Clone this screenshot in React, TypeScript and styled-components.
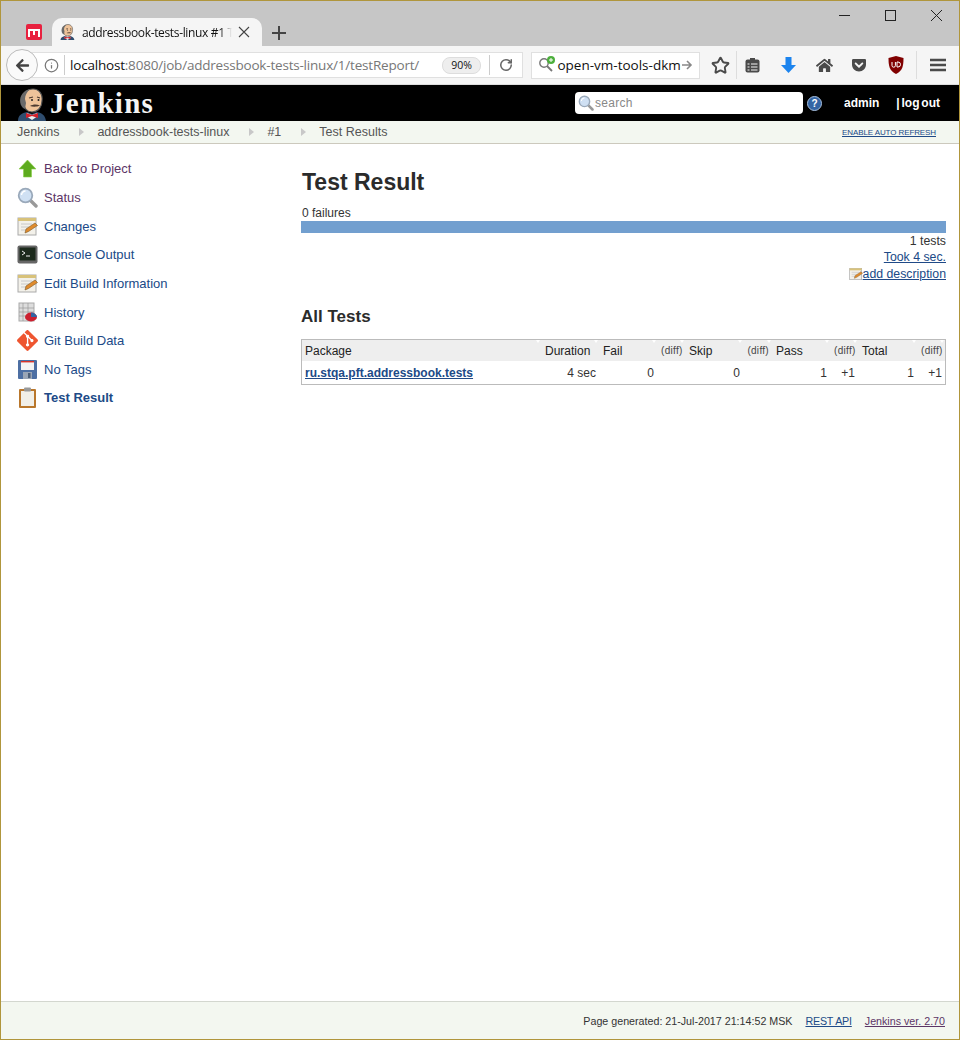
import React from "react";
import styled, { createGlobalStyle } from "styled-components";
import { FaArrowLeft, FaGetPocket, FaHome } from "react-icons/fa";
import { SiGit } from "react-icons/si";
import { Info, RotateCw, Star } from "lucide-react";

const GlobalStyle = createGlobalStyle`
  html, body {
    margin: 0;
    padding: 0;
    background: #fff;
  }
  body {
    font-family: "Liberation Sans", Arial, sans-serif;
    font-size: 12px;
    color: #333;
  }
`;

const Window = styled.div`
  width: 960px;
  height: 1040px;
  box-sizing: border-box;
  border: 1px solid #b0963c;
  display: flex;
  flex-direction: column;
  overflow: hidden;
`;

/* browser chrome */
const TabStrip = styled.div`
  height: 45px;
  flex: none;
  background: #c6c6c6;
  display: flex;
  align-items: flex-end;
  padding-left: 25px;
  position: relative;
`;

const PinnedTab = styled.div`
  width: 16px;
  height: 16px;
  margin-bottom: 6px;
  border-radius: 2px;
  background: #e8213f;
  display: flex;
  align-items: center;
  justify-content: center;
`;

const Tab = styled.div`
  width: 210px;
  height: 28px;
  margin-left: 10px;
  background: #f5f5f5;
  border-radius: 10px 10px 0 0;
  display: flex;
  align-items: center;
  padding: 0 0 0 8px;
  box-sizing: border-box;
  font-family: "Open Sans", "Noto Sans", sans-serif;
  font-size: 12px;
  color: #111;
`;

const TabTitle = styled.span`
  margin-left: 7px;
  width: 150px;
  flex: none;
  white-space: nowrap;
  letter-spacing: -0.35px;
  -webkit-mask-image: linear-gradient(to right, #000 92%, transparent);
  mask-image: linear-gradient(to right, #000 92%, transparent);
`;

const TabClose = styled.span`
  margin-left: 6px;
  display: flex;
`;

const NewTab = styled.div`
  margin: 0 0 6px 10px;
  width: 14px;
  height: 14px;
  position: relative;
  &::before,
  &::after {
    content: "";
    position: absolute;
    background: #444;
  }
  &::before {
    left: 0;
    right: 0;
    top: 6px;
    height: 2px;
  }
  &::after {
    top: 0;
    bottom: 0;
    left: 6px;
    width: 2px;
  }
`;

const WindowControls = styled.div`
  position: absolute;
  right: 17px;
  top: 9px;
  display: flex;
  gap: 35px;
  align-items: center;
`;

const ToolBar = styled.div`
  height: 38px;
  flex: none;
  background: #f5f5f5;
  border-bottom: 1px solid #ddd;
  display: flex;
  align-items: center;
  padding-left: 5px;
  position: relative;
`;

const UrlBox = styled.div`
  width: 507px;
  height: 26px;
  margin-left: 12px;
  padding-left: 18px;
  background: #fff;
  border: 1px solid #e0e0e0;
  display: flex;
  align-items: center;
  box-sizing: border-box;
  font-family: "Open Sans", "Noto Sans", sans-serif;
  font-size: 13.5px;
  color: #111;
`;

const BackButton = styled.div`
  position: absolute;
  left: 5px;
  top: 3px;
  width: 30px;
  height: 30px;
  border-radius: 50%;
  border: 1px solid #bbb;
  background: #fafafa;
  display: flex;
  align-items: center;
  justify-content: center;
  color: #444;
  z-index: 1;
`;

const InfoSlot = styled.div`
  width: 20px;
  margin-left: 7px;
  color: #777;
  display: flex;
  align-items: center;
  border-right: 1px solid #ccc;
  height: 20px;
  flex: none;
`;

const UrlText = styled.span`
  margin-left: 5px;
  width: 372px;
  flex: none;
  white-space: nowrap;
  letter-spacing: -0.2px;
  color: #777;
  b {
    font-weight: 400;
    color: #111;
  }
`;

const ZoomPill = styled.div`
  width: 37px;
  height: 15px;
  border-radius: 8px;
  border: 1px solid #ddd;
  background: #eee;
  font-size: 10.5px;
  line-height: 15px;
  text-align: center;
  flex: none;
`;

const ReloadSlot = styled.div`
  margin-left: 8px;
  padding-left: 9px;
  height: 20px;
  border-left: 1px solid #ccc;
  display: flex;
  align-items: center;
  color: #666;
`;

const SearchBox = styled.div`
  width: 169px;
  height: 27px;
  margin-left: 8px;
  background: #fff;
  border: 1px solid #e0e0e0;
  box-sizing: border-box;
  display: flex;
  align-items: center;
  padding: 0 5px 0 6px;
  font-family: "Open Sans", "Noto Sans", sans-serif;
  font-size: 13.5px;
  color: #111;
`;

const SearchText = styled.span`
  margin-left: 1px;
  width: 124px;
  flex: none;
  white-space: nowrap;
`;

const ToolIcons = styled.div`
  display: flex;
  align-items: center;
  height: 100%;
  padding-left: 6px;
`;

const ToolIcon = styled.div<{ $width: number; $color?: string; $divider?: boolean }>`
  width: ${(p) => p.$width}px;
  display: flex;
  flex: none;
  justify-content: center;
  align-items: center;
  color: ${(p) => p.$color || "#4a4a4a"};
  height: ${(p) => (p.$divider ? "28px" : "auto")};
  border-right: ${(p) => (p.$divider ? "1px solid #ddd" : "0")};
`;

/* jenkins header */
const PageHeader = styled.header`
  height: 36px;
  flex: none;
  background: #000;
  display: flex;
  align-items: flex-end;
  padding-left: 16px;
`;

const LogoName = styled.span`
  font-family: "Liberation Serif", serif;
  font-weight: 700;
  font-size: 29px;
  line-height: 36px;
  color: #f4f4f4;
  margin-left: 3px;
  align-self: center;
  letter-spacing: 1.3px;
`;

const HeaderSearch = styled.div`
  margin-left: auto;
  align-self: center;
  width: 228px;
  height: 22px;
  background: #fff;
  border-radius: 4px;
  display: flex;
  align-items: center;
  padding-left: 3px;
  box-sizing: border-box;
  color: #888;
  font-size: 12px;
  gap: 1px;
  letter-spacing: 0.3px;
`;

const HelpDot = styled.div`
  align-self: center;
  width: 13px;
  height: 13px;
  margin-left: 4px;
  border-radius: 50%;
  background: #3465a4;
  border: 1px solid #a9c0de;
  color: #fff;
  font-size: 10px;
  font-weight: 700;
  line-height: 13px;
  text-align: center;
`;

const HeaderLink = styled.a<{ $left: number; $right?: number }>`
  align-self: center;
  color: #fff;
  font-weight: 700;
  font-size: 12px;
  word-spacing: -1.5px;
  margin-left: ${(p) => p.$left}px;
  margin-right: ${(p) => p.$right || 0}px;
`;

/* breadcrumbs */
const CrumbBar = styled.nav`
  height: 22px;
  flex: none;
  background: #f3f7f0;
  border-bottom: 1px solid #ccc9bd;
  display: flex;
  align-items: center;
  padding: 0 23px 0 16px;
  font-size: 12.5px;
  color: #555;
`;

const Crumb = styled.a`
  color: #555;
`;

const CrumbArrow = styled.span`
  width: 0;
  height: 0;
  border-left: 5px solid #c8c8c8;
  border-top: 4px solid transparent;
  border-bottom: 4px solid transparent;
  margin: 0 13px 0 20px;
`;

const AutoRefresh = styled.a`
  margin-left: auto;
  font-size: 8px;
  letter-spacing: -0.1px;
  color: #204a87;
  text-decoration: underline;
`;

/* page body */
const Body = styled.div`
  flex: 1;
  display: flex;
  min-height: 0;
`;

const SidePanel = styled.aside`
  width: 300px;
  flex: none;
  box-sizing: border-box;
  padding: 10.5px 0 0 16px;
`;

const TaskRow = styled.a<{ $visited?: boolean; $active?: boolean }>`
  display: flex;
  align-items: center;
  height: 28.65px;
  color: ${(p) => (p.$visited ? "#5c3566" : "#204a87")};
  font-weight: ${(p) => (p.$active ? 700 : 400)};
  font-size: 13px;
`;

const TaskIcon = styled.span`
  width: 27px;
  display: flex;
  align-items: center;
  flex: none;
`;

const Main = styled.main`
  flex: 1;
  padding: 23px 13px 0 0;
  min-width: 0;
`;

const Title = styled.h1`
  margin: 0 0 0 1px;
  font-size: 23px;
  line-height: 30px;
  font-weight: 700;
  color: #2b2b2b;
`;

const Failures = styled.div`
  margin: 9px 0 0 1px;
  line-height: 15px;
`;

const ProgressBar = styled.div`
  height: 12px;
  background: #729fcf;
`;

const SummaryLine = styled.div`
  line-height: 16.4px;
  font-size: 12.3px;
  display: flex;
  justify-content: flex-end;
  align-items: center;
  a {
    color: #204a87;
    text-decoration: underline;
  }
`;

const SectionTitle = styled.h2`
  margin: 25px 0 12px;
  font-size: 17px;
  line-height: 20px;
  font-weight: 700;
  color: #2b2b2b;
`;

const ResultTable = styled.table`
  width: 645px;
  table-layout: fixed;
  border-collapse: separate;
  border-spacing: 0;
  border: 1px solid #bbb;
  font-size: 12px;
`;

const HeadCell = styled.th<{ $small?: boolean }>`
  height: 21px;
  padding: 0 3px 0 4px;
  background: #eee;
  font-weight: 400;
  text-align: ${(p) => (p.$small ? "right" : "left")};
  font-size: ${(p) => (p.$small ? "10px" : "12px")};
  letter-spacing: ${(p) => (p.$small ? "0.3px" : "0")};
  color: ${(p) => (p.$small ? "#444" : "#222")};
  position: relative;
  white-space: nowrap;
  &:first-child {
    padding-left: 3px;
  }
  &::after {
    content: "";
    position: absolute;
    top: 0;
    right: 1px;
    border-top: 3px solid #fff;
    border-left: 2.5px solid transparent;
    border-right: 2.5px solid transparent;
  }
`;

const DataCell = styled.td<{ $left?: boolean }>`
  height: 23px;
  padding: 0 3px;
  text-align: ${(p) => (p.$left ? "left" : "right")};
  color: #333;
  a {
    color: #204a87;
    font-weight: 700;
    text-decoration: underline;
  }
`;

const Footer = styled.footer`
  height: 38px;
  flex: none;
  box-sizing: border-box;
  border-top: 1px solid #d3d7cf;
  background: #f3f7f0;
  display: flex;
  justify-content: flex-end;
  align-items: center;
  padding-right: 14px;
  font-size: 10.7px;
  color: #333;
`;

const FootLink = styled.a<{ $visited?: boolean }>`
  margin-left: 13px;
  color: ${(p) => (p.$visited ? "#5c3566" : "#204a87")};
  letter-spacing: ${(p) => (p.$visited ? "0" : "-0.2px")};
  text-decoration: underline;
`;

/* little drawings */
function Butler({ size }: { size: number }) {
  return (
    <svg width={size} height={size * 1.1} viewBox="0 0 30 33">
      <path d="M1 33c0-6 4-8 9-9l5 2 5-2c5 1 8 3 9 9z" fill="#2f4d6e" />
      <path d="M10 25l5 2 5-2 1 3-6 4-6-4z" fill="#eee" />
      <path d="M9 25l6 2 6-2v5l-6-2-6 2z" fill="#d3202a" />
      <path d="M6 14C5 6 10 1 16 1s10 5 9 12c0 6-4 11-10 11-5 0-8-4-9-10z" fill="#eec39a" stroke="#555" strokeWidth="1.2" />
      <path d="M6 20C2 16 2 8 7 4c2-2 4-2.500 6-3-3 3-5 6-5 10l1 4-1 6z" fill="#6a6a6a" />
      <path d="M13 18c3-2 7-2 10-.5-3 1.500-7 1.500-10 .5z" fill="#4b3a30" />
      <path d="M12 10l4-1M20 9l3 1" stroke="#4b3a30" strokeWidth="1.2" />
      <circle cx="15" cy="12" r="1" fill="#222" />
      <circle cx="21.500" cy="12" r="1" fill="#222" />
    </svg>
  );
}

function Magnifier({ size = 21 }: { size?: number }) {
  return (
    <svg width={size} height={size} viewBox="0 0 21 21">
      <path d="M13 13l6 6" stroke="#999" strokeWidth="3.4" strokeLinecap="round" />
      <circle cx="8.5" cy="8.5" r="6.8" fill="#cfe0f3" stroke="#9aa9ba" strokeWidth="1.8" />
      <path d="M4.5 8a4 4 0 0 1 4-4" stroke="#fff" strokeWidth="1.4" fill="none" />
    </svg>
  );
}

function Notepad({ size = 21 }: { size?: number }) {
  return (
    <svg width={size} height={size} viewBox="0 0 21 21">
      <rect x="1" y="2" width="18" height="17" fill="#f3f1ea" stroke="#aaa" />
      <rect x="1" y="2" width="18" height="3" fill="#d8c27a" />
      <path d="M4 8h11M4 11h8M4 14h5" stroke="#c8c8c8" />
      <path d="M8 17l1-4 9-6 2.500 2.500-9 6z" fill="#e08b2d" stroke="#7a5a2a" strokeWidth=".6" />
    </svg>
  );
}

function UpArrow() {
  return (
    <svg width="21" height="21" viewBox="0 0 21 21">
      <path d="M10.5 2L19 11h-4.5v8h-8v-8H2z" fill="#5dab1e" stroke="#8ccf4a" strokeWidth=".6" />
    </svg>
  );
}

function Terminal() {
  return (
    <svg width="21" height="21" viewBox="0 0 21 21">
      <rect x=".5" y="1.5" width="20" height="18" rx="2" fill="#666" />
      <rect x="2.5" y="3.5" width="16" height="13" fill="#1c2a1c" />
      <path d="M5 7l3 2-3 2" stroke="#eee" strokeWidth="1" fill="none" />
      <path d="M9 12h4" stroke="#eee" />
    </svg>
  );
}

function HistoryIcon() {
  return (
    <svg width="21" height="21" viewBox="0 0 21 21">
      <rect x="2" y="1" width="15" height="18" fill="#ddd" stroke="#aaa" />
      <path d="M2 6h15M2 10h15M2 14h15M6 1v18M11 1v18" stroke="#999" strokeWidth=".7" />
      <ellipse cx="14" cy="15" rx="6" ry="4.4" fill="#cc2030" />
      <path d="M14 15V10.6a6 4.4 0 0 1 6 4.4z" fill="#3465a4" />
    </svg>
  );
}

function Floppy() {
  return (
    <svg width="21" height="21" viewBox="0 0 21 21">
      <rect x="1" y="1" width="19" height="19" rx="1" fill="#4d6fa3" />
      <rect x="4" y="2" width="13" height="9" fill="#f4f4f4" />
      <rect x="4" y="2" width="13" height="1.4" fill="#d8342a" />
      <rect x="6" y="13" width="9" height="7" fill="#9aa5b5" />
      <rect x="11" y="14" width="2.5" height="5" fill="#4d5f78" />
    </svg>
  );
}

function Clipboard() {
  return (
    <svg width="21" height="22" viewBox="0 0 21 22">
      <rect x="2" y="2" width="17" height="19" rx="1" fill="#b9772c" />
      <rect x="4" y="4" width="13" height="15" fill="#f1efe8" />
      <rect x="7" y="0.5" width="7" height="4" rx="1" fill="#999" />
    </svg>
  );
}

function UBlock() {
  return (
    <svg width="16" height="18" viewBox="0 0 16 18">
      <path d="M8 0l7.500 2c0 8-1 13-7.500 16C1.500 15 .5 10 .5 2z" fill="#800000" />
      <path d="M4 6v3.500a1.700 1.700 0 0 0 3.400 0V6M9 6v5h1a2.500 2.500 0 0 0 0-5z" stroke="#fff" fill="none" />
    </svg>
  );
}

const tasks = [
  { label: "Back to Project", icon: <UpArrow />, visited: true },
  { label: "Status", icon: <Magnifier />, visited: true },
  { label: "Changes", icon: <Notepad /> },
  { label: "Console Output", icon: <Terminal /> },
  { label: "Edit Build Information", icon: <Notepad /> },
  { label: "History", icon: <HistoryIcon /> },
  { label: "Git Build Data", icon: <SiGit size={21} color="#ee5530" /> },
  { label: "No Tags", icon: <Floppy /> },
  { label: "Test Result", icon: <Clipboard />, active: true },
];

const columns: [string, number, boolean?][] = [
  ["Package", 239],
  ["Duration", 58],
  ["Fail", 58],
  ["(diff)", 28, true],
  ["Skip", 58],
  ["(diff)", 29, true],
  ["Pass", 58],
  ["(diff)", 28, true],
  ["Total", 59],
  ["(diff)", 28, true],
];

export default function App() {
  return (
    <Window>
      <GlobalStyle />
      <TabStrip>
        <PinnedTab>
          <svg width="12" height="9" viewBox="0 0 12 9">
            <path d="M1 9V2h10v7M6 2v5" stroke="#fff" strokeWidth="2" fill="none" />
          </svg>
        </PinnedTab>
        <Tab>
          <Butler size={15} />
          <TabTitle>addressbook-tests-linux #1 T</TabTitle>
          <TabClose>
            <svg width="12" height="12" viewBox="0 0 12 12">
              <path d="M1 1l10 10M11 1L1 11" stroke="#444" strokeWidth="1.1" />
            </svg>
          </TabClose>
        </Tab>
        <NewTab />
        <WindowControls>
          <svg width="11" height="11" viewBox="0 0 11 11">
            <path d="M0 5.5h11" stroke="#222" />
          </svg>
          <svg width="11" height="11" viewBox="0 0 11 11">
            <rect x=".5" y=".5" width="10" height="10" fill="none" stroke="#222" />
          </svg>
          <svg width="11" height="11" viewBox="0 0 11 11">
            <path d="M0 0l11 11M11 0L0 11" stroke="#222" />
          </svg>
        </WindowControls>
      </TabStrip>
      <ToolBar>
        <BackButton>
          <FaArrowLeft size={15} />
        </BackButton>
        <UrlBox>
          <InfoSlot>
            <Info size={15} />
          </InfoSlot>
          <UrlText>
            <b>localhost</b>:8080/job/addressbook-tests-linux/1/testReport/
          </UrlText>
          <ZoomPill>90%</ZoomPill>
          <ReloadSlot>
            <RotateCw size={14} strokeWidth={2.6} />
          </ReloadSlot>
        </UrlBox>
        <SearchBox>
          <svg width="18" height="18" viewBox="0 0 18 18">
            <circle cx="6" cy="7" r="4.2" fill="none" stroke="#777" strokeWidth="1.4" />
            <path d="M9 10l5 5" stroke="#777" strokeWidth="1.8" />
            <circle cx="13" cy="4" r="4" fill="#4caf3c" />
            <path d="M11 4h4M13 2v4" stroke="#fff" />
          </svg>
          <SearchText>open-vm-tools-dkm</SearchText>
          <svg width="12" height="12" viewBox="0 0 12 12">
            <path d="M1 6h9M6 2l4 4-4 4" stroke="#888" strokeWidth="1.6" fill="none" />
          </svg>
        </SearchBox>
        <ToolIcons>
          <ToolIcon $width={29}>
            <Star size={19} strokeWidth={2.4} />
          </ToolIcon>
          <ToolIcon $width={1} $divider />
          <ToolIcon $width={30}>
            <svg width="15" height="15" viewBox="0 0 15 15">
              <rect x=".5" y="1.5" width="14" height="13" rx="2" fill="#4a4a4a" />
              <rect x="5" y="0" width="5" height="3" fill="#4a4a4a" />
              <path d="M2.5 6h2M6 6h6.5M2.5 9h2M6 9h6.5M2.5 12h2M6 12h6.5" stroke="#f5f5f5" />
            </svg>
          </ToolIcon>
          <ToolIcon $width={42} $color="#1c84ee">
            <svg width="15" height="16" viewBox="0 0 15 16">
              <path d="M4.500 0h6v8H15l-7.500 8L0 8h4.500z" fill="currentColor" />
            </svg>
          </ToolIcon>
          <ToolIcon $width={30}>
            <FaHome size={17} />
          </ToolIcon>
          <ToolIcon $width={40}>
            <FaGetPocket size={16} />
          </ToolIcon>
          <ToolIcon $width={34}>
            <UBlock />
          </ToolIcon>
          <ToolIcon $width={3} $divider />
          <ToolIcon $width={42}>
            <svg width="16" height="14" viewBox="0 0 16 14">
              <path d="M0 2h16M0 7h16M0 12h16" stroke="#4a4a4a" strokeWidth="2.4" />
            </svg>
          </ToolIcon>
        </ToolIcons>
      </ToolBar>
      <PageHeader>
        <Butler size={30} />
        <LogoName>Jenkins</LogoName>
        <HeaderSearch>
          <Magnifier size={16} />
          search
        </HeaderSearch>
        <HelpDot>?</HelpDot>
        <HeaderLink $left={22}>admin</HeaderLink>
        <HeaderLink $left={17} $right={19}>
          | log out
        </HeaderLink>
      </PageHeader>
      <CrumbBar>
        <Crumb>Jenkins</Crumb>
        <CrumbArrow />
        <Crumb>addressbook-tests-linux</Crumb>
        <CrumbArrow />
        <Crumb>#1</Crumb>
        <CrumbArrow />
        <Crumb>Test Results</Crumb>
        <AutoRefresh>ENABLE AUTO REFRESH</AutoRefresh>
      </CrumbBar>
      <Body>
        <SidePanel>
          {tasks.map((t) => (
            <TaskRow key={t.label} $visited={t.visited} $active={t.active}>
              <TaskIcon>{t.icon}</TaskIcon>
              {t.label}
            </TaskRow>
          ))}
        </SidePanel>
        <Main>
          <Title>Test Result</Title>
          <Failures>0 failures</Failures>
          <ProgressBar />
          <SummaryLine>1 tests</SummaryLine>
          <SummaryLine>
            <a>Took 4 sec.</a>
          </SummaryLine>
          <SummaryLine>
            <Notepad size={14} />
            <a>add description</a>
          </SummaryLine>
          <SectionTitle>All Tests</SectionTitle>
          <ResultTable>
            <colgroup>
              {columns.map(([, w], i) => (
                <col key={i} style={{ width: w }} />
              ))}
            </colgroup>
            <thead>
              <tr>
                {columns.map(([name, , small], i) => (
                  <HeadCell key={i} $small={small}>
                    {name}
                  </HeadCell>
                ))}
              </tr>
            </thead>
            <tbody>
              <tr>
                <DataCell $left>
                  <a>ru.stqa.pft.addressbook.tests</a>
                </DataCell>
                <DataCell>4 sec</DataCell>
                <DataCell>0</DataCell>
                <DataCell />
                <DataCell>0</DataCell>
                <DataCell />
                <DataCell>1</DataCell>
                <DataCell>+1</DataCell>
                <DataCell>1</DataCell>
                <DataCell>+1</DataCell>
              </tr>
            </tbody>
          </ResultTable>
        </Main>
      </Body>
      <Footer>
        Page generated: 21-Jul-2017 21:14:52 MSK
        <FootLink>REST API</FootLink>
        <FootLink $visited>Jenkins ver. 2.70</FootLink>
      </Footer>
    </Window>
  );
}
